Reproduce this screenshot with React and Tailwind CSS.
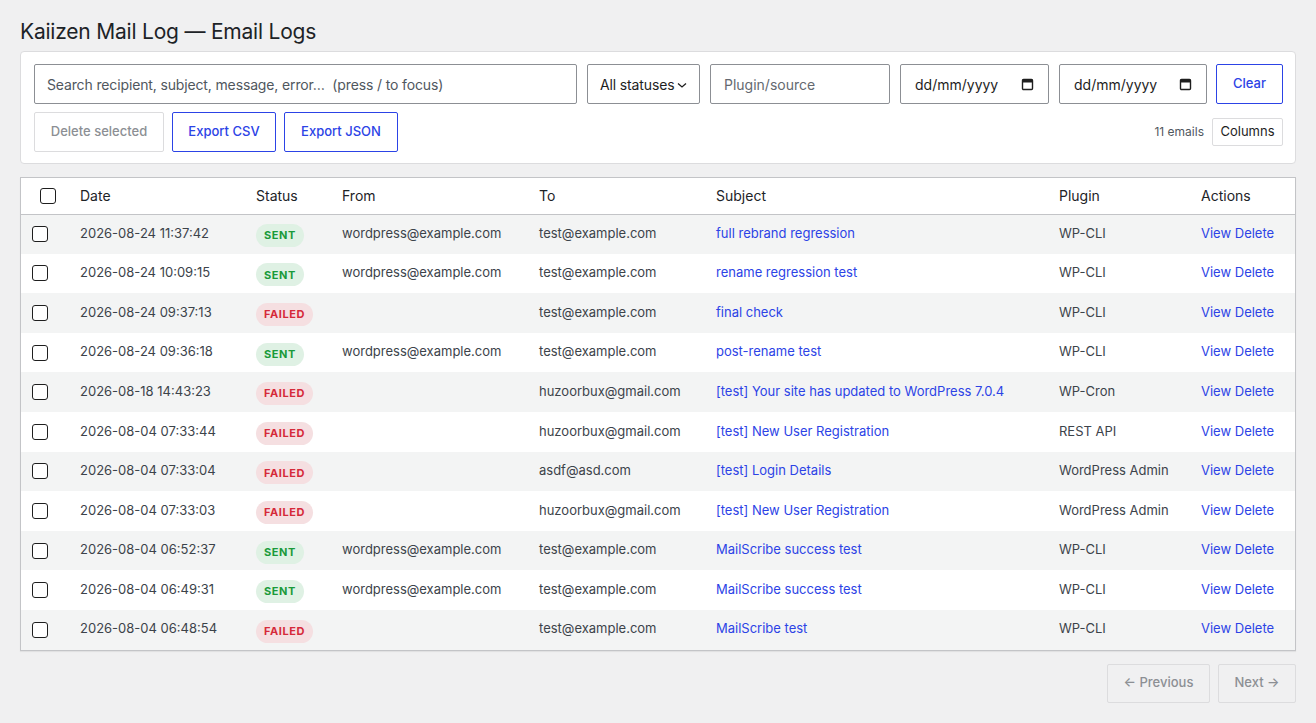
import React from "react";

const rows = [
  ["2026-08-24 11:37:42", "SENT", "wordpress@example.com", "test@example.com", "full rebrand regression", "WP-CLI"],
  ["2026-08-24 10:09:15", "SENT", "wordpress@example.com", "test@example.com", "rename regression test", "WP-CLI"],
  ["2026-08-24 09:37:13", "FAILED", "", "test@example.com", "final check", "WP-CLI"],
  ["2026-08-24 09:36:18", "SENT", "wordpress@example.com", "test@example.com", "post-rename test", "WP-CLI"],
  ["2026-08-18 14:43:23", "FAILED", "", "huzoorbux@gmail.com", "[test] Your site has updated to WordPress 7.0.4", "WP-Cron"],
  ["2026-08-04 07:33:44", "FAILED", "", "huzoorbux@gmail.com", "[test] New User Registration", "REST API"],
  ["2026-08-04 07:33:04", "FAILED", "", "asdf@asd.com", "[test] Login Details", "WordPress Admin"],
  ["2026-08-04 07:33:03", "FAILED", "", "huzoorbux@gmail.com", "[test] New User Registration", "WordPress Admin"],
  ["2026-08-04 06:52:37", "SENT", "wordpress@example.com", "test@example.com", "MailScribe success test", "WP-CLI"],
  ["2026-08-04 06:49:31", "SENT", "wordpress@example.com", "test@example.com", "MailScribe success test", "WP-CLI"],
  ["2026-08-04 06:48:54", "FAILED", "", "test@example.com", "MailScribe test", "WP-CLI"],
];

function Checkbox() {
  return <span className="block w-4 h-4 border border-[#1e1e1e] rounded-[3px] bg-white" />;
}

function Cal() {
  return (
    <svg width="13" height="13" viewBox="0 0 13 13" fill="none">
      <rect x="1.5" y="1.5" width="10" height="10" rx="1" stroke="#1e1e1e" strokeWidth="1.4" />
      <rect x="1.5" y="1.5" width="10" height="3" fill="#1e1e1e" />
    </svg>
  );
}

function DateBox({ w }) {
  return (
    <div className={"shrink-0 h-10 border border-[#8c8f94] rounded-[2px] bg-white flex items-center justify-between pl-[14px] pr-[14px] text-[14px] text-[#1e1e1e] " + w}>
      <span>dd/mm/yyyy</span>
      <Cal />
    </div>
  );
}

function Badge({ s }) {
  const sent = s === "SENT";
  return (
    <span
      className={
        "inline-flex items-center justify-center h-[23px] px-[8px] rounded-full text-[11px] font-bold tracking-[0.05em] " +
        (sent ? "bg-[#dff1e4] text-[#1a9a3a]" : "bg-[#f5dfe1] text-[#d52a3a]")
      }
    >
      {s}
    </span>
  );
}

export default function App() {
  return (
    <div className="min-h-[723px] bg-[#f0f0f1] px-5 pt-[18px] pb-5 text-[#1e1e1e]" style={{ fontFamily: "Inter, 'Noto Sans', sans-serif" }}>
      <h1 className="text-[21px] leading-[28px] font-normal tracking-[-0.01em] text-[#1d2327] mb-[5px]">Kaiizen Mail Log — Email Logs</h1>

      <div className="bg-white border border-[#dcdcde] rounded-[4px] pl-[13px] pr-[12px] pt-[12px] pb-[11px]">
        <div className="flex items-center">
          <div className="shrink-0 w-[543px] h-10 border border-[#8c8f94] rounded-[2px] flex items-center px-[12px] text-[14px] tracking-[-0.01em] text-[#50575e] whitespace-nowrap">
            Search recipient, subject, message, error…&nbsp; (press / to focus)
          </div>
          <div className="shrink-0 ml-[10px] w-[113px] h-10 border border-[#8c8f94] rounded-[2px] flex items-center pl-[12px] pr-[8px] text-[14px] tracking-[-0.01em] text-[#1e1e1e] gap-[2px] whitespace-nowrap">
            <span>All statuses</span>
            <svg width="12" height="12" viewBox="0 0 12 12" fill="none" className="mt-[1px] shrink-0">
              <path d="M2 4.5 L6 8 L10 4.5" stroke="#1e1e1e" strokeWidth="1.3" />
            </svg>
          </div>
          <div className="shrink-0 ml-[10px] w-[180px] h-10 border border-[#8c8f94] rounded-[2px] flex items-center px-[13px] text-[14px] text-[#646970]">
            Plugin/source
          </div>
          <div className="ml-[10px]"><DateBox w="w-[149px]" /></div>
          <div className="ml-[10px]"><DateBox w="w-[148px]" /></div>
          <button className="shrink-0 ml-[9px] w-[67px] h-10 border border-[#2c43e6] rounded-[2px] text-[13px] font-medium text-[#2c43e6] bg-white">
            Clear
          </button>
        </div>
        <div className="flex items-center mt-[8px]">
          <div className="flex gap-2">
            <button className="w-[130px] h-10 border border-[#dcdcde] rounded-[2px] text-[13px] font-medium text-[#8c8f94] bg-white">
              Delete selected
            </button>
            <button className="w-[104px] h-10 border border-[#2c43e6] rounded-[2px] text-[13px] font-medium text-[#2c43e6] bg-white">
              Export CSV
            </button>
            <button className="w-[114px] h-10 border border-[#2c43e6] rounded-[2px] text-[13px] font-medium text-[#2c43e6] bg-white">
              Export JSON
            </button>
          </div>
          <div className="ml-auto flex items-center gap-2">
            <span className="text-[12px] text-[#50575e]">11 emails</span>
            <button className="w-[71px] h-[28px] border border-[#dcdcde] rounded-[2px] text-[13px] text-[#1e1e1e] bg-white">
              Columns
            </button>
          </div>
        </div>
      </div>

      <div className="mt-[13px] bg-white border border-[#c3c4c7] shadow-[0_1px_1px_rgba(0,0,0,0.06)]">
        <table className="w-full border-collapse text-[13px]">
          <thead>
            <tr className="h-[36px] border-b border-[#c3c4c7] text-[14px] text-[#1d2327]">
              <th className="w-[59px] pl-[19px] font-normal text-left"><Checkbox /></th>
              <th className="w-[176px] pl-0 font-normal text-left">Date</th>
              <th className="w-[86px] font-normal text-left">Status</th>
              <th className="w-[197px] font-normal text-left">From</th>
              <th className="w-[177px] font-normal text-left">To</th>
              <th className="w-[343px] font-normal text-left">Subject</th>
              <th className="w-[142px] font-normal text-left">Plugin</th>
              <th className="font-normal text-left">Actions</th>
            </tr>
          </thead>
          <tbody>
            {rows.map((r, i) => (
              <tr key={i} className={"h-[39.6px] " + (i % 2 === 0 ? "bg-[#f3f4f4]" : "bg-white")}>
                <td className="pl-[11px]"><Checkbox /></td>
                <td className="pb-[1px] text-[#3c434a]">{r[0]}</td>
                <td className="pt-[3px]"><Badge s={r[1]} /></td>
                <td className="pb-[1px] text-[#3c434a]">{r[2]}</td>
                <td className="pb-[1px] text-[#3c434a]">{r[3]}</td>
                <td className="pb-[1px] text-[#2c43e6]">{r[4]}</td>
                <td className="pb-[1px] text-[#3c434a]">{r[5]}</td>
                <td className="pb-[1px] text-[#2c43e6]">View Delete</td>
              </tr>
            ))}
          </tbody>
        </table>
      </div>

      <div className="flex justify-end gap-2 mt-[13px]">
        <button className="w-[103px] h-[39px] border border-[#dcdcde] rounded-[2px] text-[13px] font-medium text-[#8c8f94]">
          ← Previous
        </button>
        <button className="w-[78px] h-[39px] border border-[#dcdcde] rounded-[2px] text-[13px] font-medium text-[#8c8f94]">
          Next →
        </button>
      </div>
    </div>
  );
}
